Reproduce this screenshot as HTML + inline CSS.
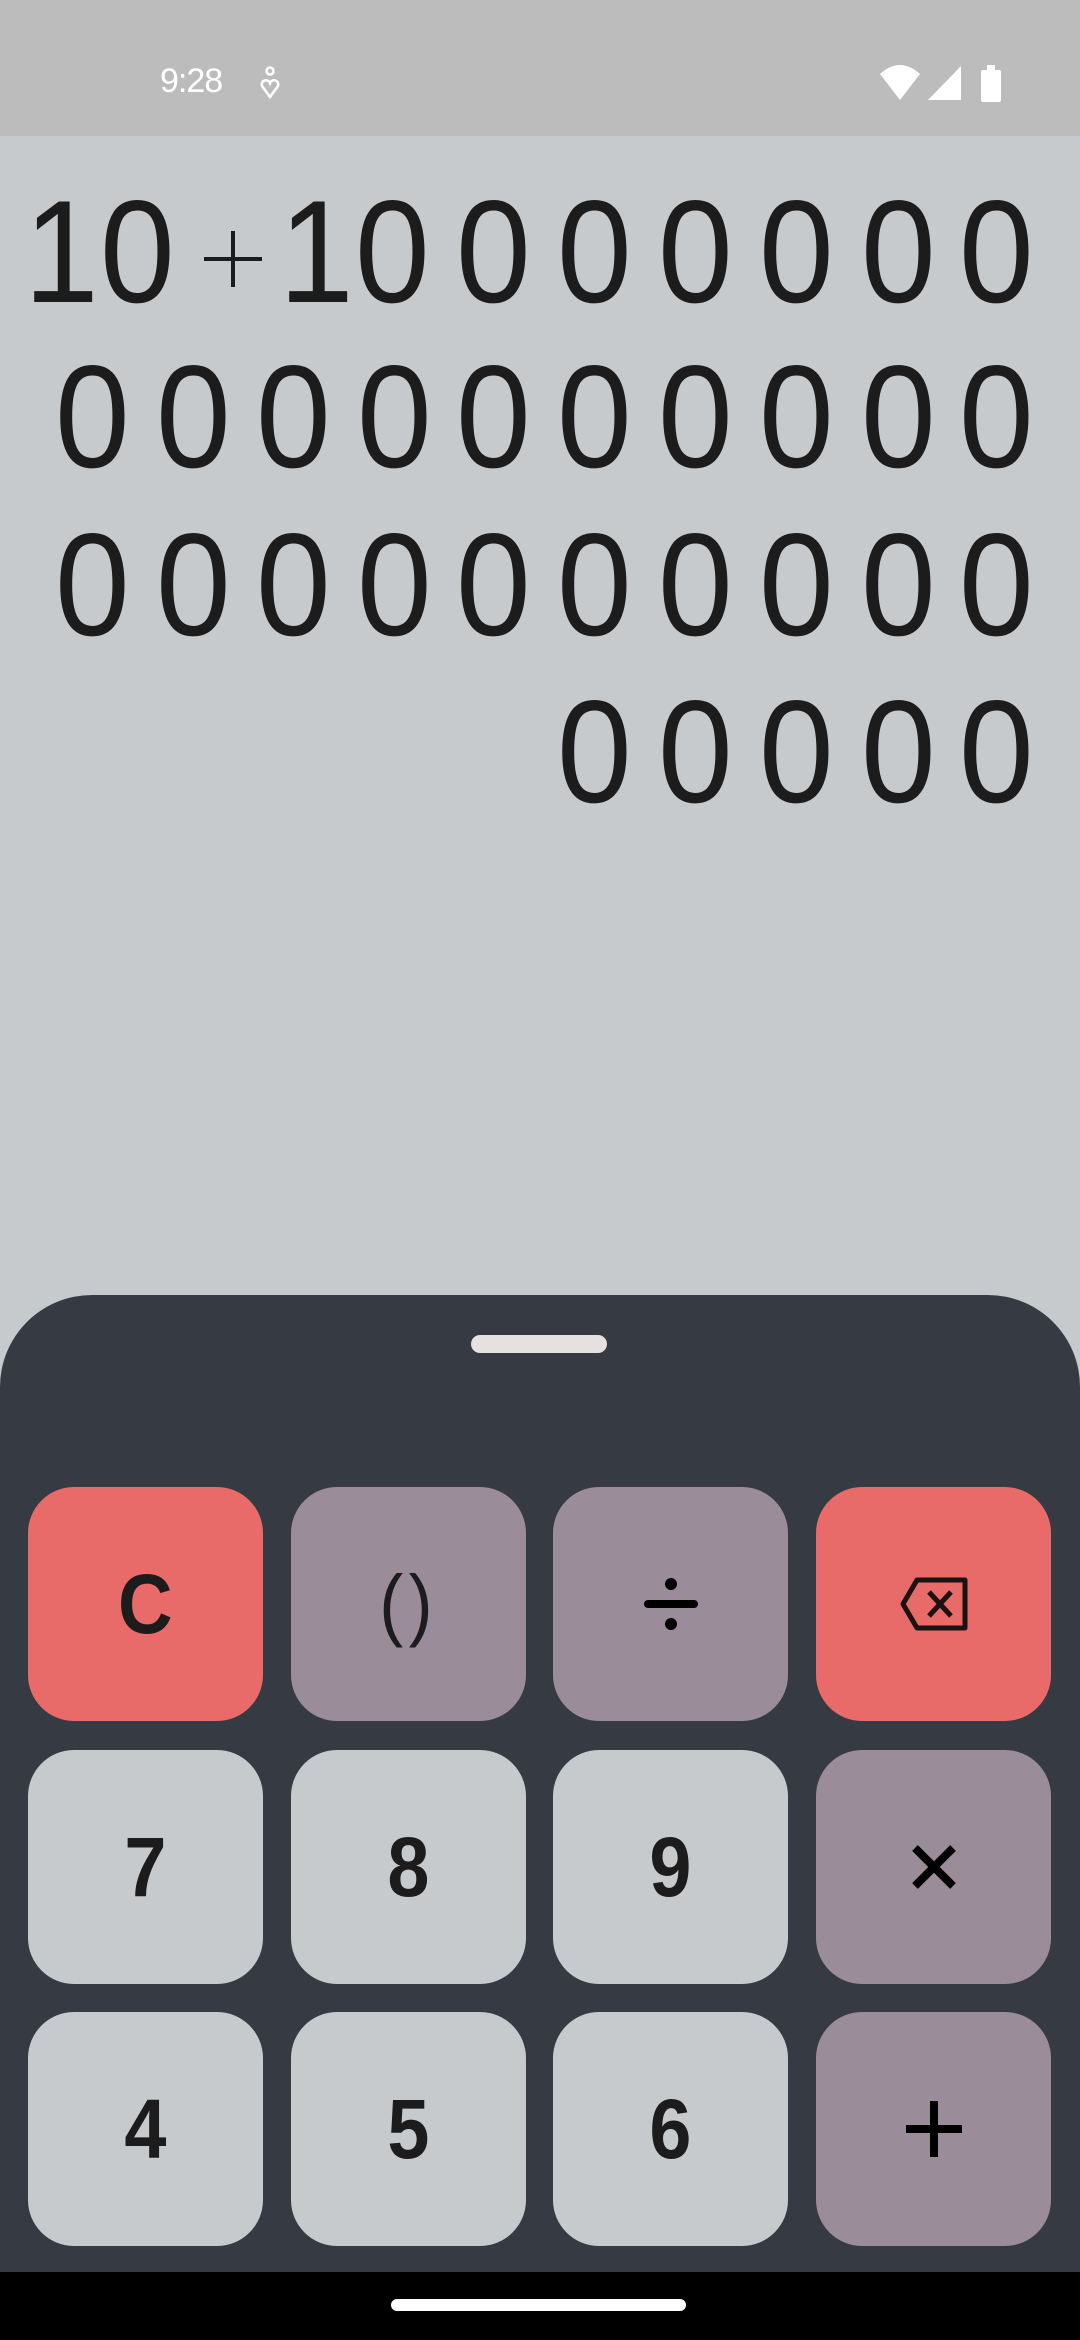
<!DOCTYPE html>
<html><head><meta charset="utf-8"><style>
*{margin:0;padding:0;box-sizing:border-box}
body{width:1080px;height:2340px;background:#c7cacd;position:relative;overflow:hidden;font-family:"Liberation Sans",sans-serif}
.sb{position:absolute;left:0;top:0;width:1080px;height:136px;background:#bcbcbc}
.t{position:absolute;left:160px;top:62px;font-size:34px;color:#fff;letter-spacing:-1px}
.g{position:absolute;font-size:146px;color:#1c1c1c;line-height:1;height:146px;transform:scaleX(0.92);transform-origin:left top}
.sheet{position:absolute;left:0;top:1295px;width:1080px;height:1000px;background:#363a42;border-radius:92px 92px 0 0}
.handle{position:absolute;left:471px;top:1335px;width:136px;height:18px;background:#e8dfdf;border-radius:9px}
.b{position:absolute;width:235px;height:234px;border-radius:46px;display:flex;align-items:center;justify-content:center;font-size:84px;font-weight:bold;color:#1c1c1c}
.b span{display:inline-block;transform:scaleX(0.9)}
.r{background:#e86a69}.m{background:#9a8c99}.l{background:#c7cacd}
.nav{position:absolute;left:0;top:2272px;width:1080px;height:68px;background:#000}
.pill{position:absolute;left:391px;top:2299px;width:295px;height:12px;background:#fff;border-radius:6px}
</style></head><body>
<div class="sb"></div>
<div class="t">9:28</div>
<svg style="position:absolute;left:258px;top:66px" width="24" height="34" viewBox="0 0 24 34"><circle cx="12" cy="5" r="3.5" fill="none" stroke="#fff" stroke-width="2.5"/><path d="M12 31 L4 20 a4 4 0 0 1 8 -3 a4 4 0 0 1 8 3 Z" fill="none" stroke="#fff" stroke-width="2.5"/></svg>
<svg style="position:absolute;left:878px;top:64px" width="130" height="38" viewBox="0 0 130 38">
<path d="M2 10 Q22 -8 42 10 L22 36 Z" fill="#fff"/>
<path d="M50 36 L83 2 L83 36 Z" fill="#fff"/>
<rect x="103" y="6" width="20" height="32" rx="2" fill="#fff"/><rect x="109" y="1" width="8" height="6" fill="#fff"/>
</svg>

<!-- line 1 -->
<div class="g" style="left:24px;top:179px">1</div>
<div class="g" style="left:100px;top:179px">0</div>
<svg style="position:absolute;left:204px;top:231px" width="58" height="56"><rect x="0" y="26" width="58" height="4" fill="#1c1c1c"/><rect x="27" y="0" width="4" height="56" fill="#1c1c1c"/></svg>
<div class="g" style="left:279px;top:179px">1</div>
<div class="g" style="left:355px;top:179px">0</div>
<div class="g" style="left:456px;top:179px">0</div>
<div class="g" style="left:557px;top:179px">0</div>
<div class="g" style="left:658px;top:179px">0</div>
<div class="g" style="left:759px;top:179px">0</div>
<div class="g" style="left:861px;top:179px">0</div>
<div class="g" style="left:959px;top:179px">0</div>
<!-- line 2 -->
<div class="g" style="left:55px;top:344px">0</div><div class="g" style="left:156px;top:344px">0</div><div class="g" style="left:256px;top:344px">0</div><div class="g" style="left:357px;top:344px">0</div><div class="g" style="left:456px;top:344px">0</div><div class="g" style="left:557px;top:344px">0</div><div class="g" style="left:658px;top:344px">0</div><div class="g" style="left:759px;top:344px">0</div><div class="g" style="left:861px;top:344px">0</div><div class="g" style="left:959px;top:344px">0</div>
<!-- line 3 -->
<div class="g" style="left:55px;top:512px">0</div><div class="g" style="left:156px;top:512px">0</div><div class="g" style="left:256px;top:512px">0</div><div class="g" style="left:357px;top:512px">0</div><div class="g" style="left:456px;top:512px">0</div><div class="g" style="left:557px;top:512px">0</div><div class="g" style="left:658px;top:512px">0</div><div class="g" style="left:759px;top:512px">0</div><div class="g" style="left:861px;top:512px">0</div><div class="g" style="left:959px;top:512px">0</div>
<!-- line 4 -->
<div class="g" style="left:557px;top:679px">0</div><div class="g" style="left:658px;top:679px">0</div><div class="g" style="left:759px;top:679px">0</div><div class="g" style="left:861px;top:679px">0</div><div class="g" style="left:959px;top:679px">0</div>

<div class="sheet"></div>
<div class="handle"></div>

<div class="b r" style="left:28px;top:1487px"><span>C</span></div>
<div class="b m" style="left:291px;top:1487px;font-weight:normal;font-size:80px;letter-spacing:6px"><span>()</span></div>
<div class="b m" style="left:553px;top:1487px">
<svg width="56" height="56" viewBox="0 0 56 56"><circle cx="28" cy="8" r="6" fill="#000"/><rect x="1" y="24" width="54" height="8" rx="4" fill="#000"/><circle cx="28" cy="48" r="6" fill="#000"/></svg></div>
<div class="b r" style="left:816px;top:1487px">
<svg width="70" height="54" viewBox="0 0 70 54"><path d="M18 3 H66 V51 H18 L4 27 Z" fill="none" stroke="#1c1212" stroke-width="5" stroke-linejoin="round"/><path d="M30 15 L52 39 M52 15 L30 39" stroke="#1c1212" stroke-width="5"/></svg></div>

<div class="b l" style="left:28px;top:1750px"><span>7</span></div>
<div class="b l" style="left:291px;top:1750px"><span>8</span></div>
<div class="b l" style="left:553px;top:1750px"><span>9</span></div>
<div class="b m" style="left:816px;top:1750px">
<svg width="46" height="46" viewBox="0 0 46 46"><path d="M4 4 L42 42 M42 4 L4 42" stroke="#000" stroke-width="8"/></svg></div>

<div class="b l" style="left:28px;top:2012px"><span>4</span></div>
<div class="b l" style="left:291px;top:2012px"><span>5</span></div>
<div class="b l" style="left:553px;top:2012px"><span>6</span></div>
<div class="b m" style="left:816px;top:2012px">
<svg width="56" height="56" viewBox="0 0 56 56"><rect x="0" y="24" width="56" height="8" fill="#000"/><rect x="24" y="0" width="8" height="56" fill="#000"/></svg></div>

<div class="nav"></div>
<div class="pill"></div>
</body></html>
